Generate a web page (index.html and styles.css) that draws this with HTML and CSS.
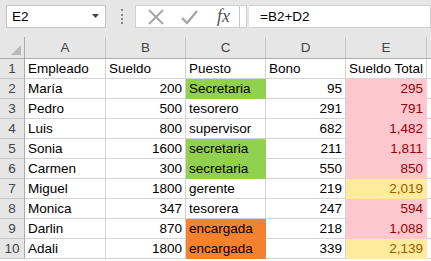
FILE: index.html
```html
<!DOCTYPE html>
<html>
<head>
<meta charset="utf-8">
<link rel="stylesheet" href="styles.css">
</head>
<body>
<div class="app">
  <div class="toolbar">
    <div class="namebox"><span>E2</span><svg class="caret" width="7" height="4" viewBox="0 0 7 4"><path d="M0 0H7L3.5 4Z" fill="#444"/></svg></div>
    <div class="dots"></div>
    <div class="btns">
      <svg width="18" height="18" viewBox="0 0 18 18"><path d="M2 2L16 16M16 2L2 16" stroke="#a6a6a6" stroke-width="2"/></svg>
      <svg width="18" height="18" viewBox="0 0 18 18"><path d="M2 10L7 15L17 3" stroke="#a6a6a6" stroke-width="2.4" fill="none"/></svg>
      <span class="fx">fx</span>
    </div>
    <div class="formula">=B2+D2</div>
  </div>
  <div class="grid">
    <div class="corner"><svg width="10" height="10" viewBox="0 0 10 10"><path d="M10 0V10H0Z" fill="#b9b9b9"/></svg></div>
    <div class="ch">A</div><div class="ch">B</div><div class="ch">C</div><div class="ch">D</div><div class="ch">E</div><div class="ch last"></div>

    <div class="rh">1</div><div class="c">Empleado</div><div class="c">Sueldo</div><div class="c">Puesto</div><div class="c">Bono</div><div class="c">Sueldo Total</div><div class="c"></div>
    <div class="rh">2</div><div class="c">María</div><div class="c n">200</div><div class="c green">Secretaria</div><div class="c n">95</div><div class="c n bad">295</div><div class="c"></div>
    <div class="rh">3</div><div class="c">Pedro</div><div class="c n">500</div><div class="c">tesorero</div><div class="c n">291</div><div class="c n bad">791</div><div class="c"></div>
    <div class="rh">4</div><div class="c">Luis</div><div class="c n">800</div><div class="c">supervisor</div><div class="c n">682</div><div class="c n bad">1,482</div><div class="c"></div>
    <div class="rh">5</div><div class="c">Sonia</div><div class="c n">1600</div><div class="c green">secretaria</div><div class="c n">211</div><div class="c n bad">1,811</div><div class="c"></div>
    <div class="rh">6</div><div class="c">Carmen</div><div class="c n">300</div><div class="c green">secretaria</div><div class="c n">550</div><div class="c n bad">850</div><div class="c"></div>
    <div class="rh">7</div><div class="c">Miguel</div><div class="c n">1800</div><div class="c">gerente</div><div class="c n">219</div><div class="c n neutral">2,019</div><div class="c"></div>
    <div class="rh">8</div><div class="c">Monica</div><div class="c n">347</div><div class="c">tesorera</div><div class="c n">247</div><div class="c n bad">594</div><div class="c"></div>
    <div class="rh">9</div><div class="c">Darlin</div><div class="c n">870</div><div class="c orange">encargada</div><div class="c n">218</div><div class="c n bad">1,088</div><div class="c"></div>
    <div class="rh">10</div><div class="c">Adali</div><div class="c n">1800</div><div class="c orange">encargada</div><div class="c n">339</div><div class="c n neutral">2,139</div><div class="c"></div>
  </div>
</div>
</body>
</html>
```
FILE: styles.css
```css
* { box-sizing: border-box; }
html, body { margin: 0; padding: 0; }
body { width: 431px; height: 261px; overflow: hidden; background: #fff; font-family: "Liberation Sans", Arial, sans-serif; font-size: 13.5px; color: #000; }
.app { display: flex; flex-direction: column; }
.toolbar { height: 37px; background: #e6e6e6; display: flex; align-items: flex-start; padding-top: 5px; padding-left: 6px; }
.namebox { width: 100px; height: 23px; background: #fff; border: 1px solid #c6c6c6; display: flex; align-items: center; justify-content: space-between; padding: 0 6px 0 5px; font-size: 13.5px; }
.caret { margin-top: -2px; }
.dots { width: 3px; height: 15px; margin: 4px 11px 0 15px; border-left: 2px dotted #8a8a8a; }
.btns { width: 112px; height: 23px; background: #fff; border: 1px solid #d0d0d0; display: flex; align-items: center; padding-left: 11px; gap: 15px; }
.fx { font-family: "Liberation Serif", "DejaVu Serif", serif; font-style: italic; font-size: 18px; color: #555; margin-left: 4px; padding-right: 9px; border-right: 1px solid #c6c6c6; height: 21px; line-height: 20px; }
.btns .fx { margin-left: 4px; }
.formula { flex: 1; height: 23px; background: #fff; border: 1px solid #d0d0d0; border-left: none; margin-left: 2px; padding-left: 11px; line-height: 21px; font-size: 13.5px; }
.grid { display: grid; grid-template-columns: 25px 81px 80px 80px 80px 81px 1fr; grid-template-rows: 22px repeat(10, 20px); }
.corner { background: #e6e6e6; border-right: 1px solid #ababab; border-bottom: 1px solid #ababab; display: flex; align-items: flex-end; justify-content: flex-end; padding: 0 3px 3px 0; }
.ch { background: #e6e6e6; border-right: 1px solid #c8c8c8; border-bottom: 1px solid #ababab; text-align: center; line-height: 21px; color: #444; font-size: 13.5px; }
.ch.last { border-right: none; }
.rh { background: #e6e6e6; border-right: 1px solid #ababab; border-bottom: 1px solid #c8c8c8; text-align: center; line-height: 19px; color: #444; font-size: 13.5px; }
.c { border-right: 1px solid #d4d4d4; border-bottom: 1px solid #d4d4d4; padding: 0 3px; line-height: 19px; white-space: nowrap; overflow: hidden; }
.n { text-align: right; }
.green { background: #92d050; border-color: #92d050; }
.orange { background: #f4822e; border-color: #f4822e; }
.bad { background: #ffc7ce; border-color: #ffc7ce; color: #9c0006; }
.neutral { background: #ffeb9c; border-color: #ffeb9c; color: #9c5700; }
```
